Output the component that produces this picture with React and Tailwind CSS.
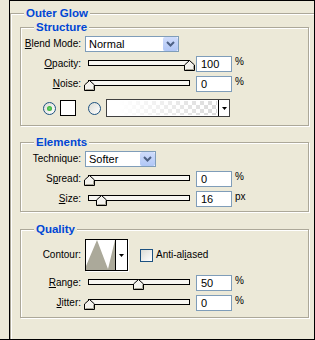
import React from "react";

const Thumb = ({ left }) => (
  <svg
    width="11"
    height="11"
    viewBox="0 0 11 11"
    className="absolute top-[4px]"
    style={{ left: left }}
  >
    <polygon points="5.5,0.5 10.5,5 10.5,10.5 0.5,10.5 0.5,5" fill="#F4F3EE" stroke="#000" />
    <polyline points="9.5,5.5 9.5,9.5 1.5,9.5" fill="none" stroke="#A7A596" />
  </svg>
);

const Slider = ({ left }) => (
  <div className="relative ml-[7px] h-[16px] w-[102px] shrink-0">
    <div className="absolute left-0 right-0 top-[4px] h-[6px] border border-black bg-[#F7F6F1]" />
    <Thumb left={left} />
  </div>
);

const Input = ({ value }) => (
  <div className="ml-[6px] flex h-[16px] w-[36px] shrink-0 items-center border border-[#7F9DB9] bg-white pl-[4px] text-[11px] leading-none">
    {value}
  </div>
);

const Label = ({ children }) => (
  <div className="w-[60px] shrink-0 text-right text-[10px] leading-none">{children}</div>
);

const U = ({ children }) => <span className="underline underline-offset-[1px]">{children}</span>;

const Chevron = () => (
  <div className="flex h-[14px] w-[15px] items-center justify-center rounded-[2px] bg-[linear-gradient(#CFDCFB,#B1C7F6)]">
    <svg width="9" height="6" viewBox="0 0 9 6">
      <polyline points="1,1 4.5,4.5 8,1" fill="none" stroke="#4D6185" strokeWidth="2" />
    </svg>
  </div>
);

const Select = ({ value, width }) => (
  <div
    className={`ml-[4px] flex h-[16px] shrink-0 items-center justify-between border border-[#7F9DB9] bg-white pl-[3px] text-[11px] leading-none ${width}`}
  >
    <span>{value}</span>
    <Chevron />
  </div>
);

const SliderRow = ({ label, value, unit, left }) => (
  <div className="flex h-[16px] items-center">
    <Label>{label}</Label>
    <Slider left={left} />
    <Input value={value} />
    <span className="ml-[3px] self-start text-[10px] leading-[12px]">{unit}</span>
  </div>
);

const Title = ({ children }) => (
  <div className="absolute left-0 top-[-7px] flex w-full pl-[13px]">
    <span className="bg-[#ECE9D8] px-[2px] text-[11.5px] font-bold leading-[12px] text-[#0046D5]">
      {children}
    </span>
  </div>
);

const Group = ({ title, className, children }) => (
  <div
    className={`relative w-[289px] border border-[#ACA899] shadow-[1px_1px_0_#fff,inset_1px_1px_0_#fff] ${className}`}
  >
    <Title>{title}</Title>
    {children}
  </div>
);

const Radio = ({ checked }) => (
  <div className="flex h-[13px] w-[13px] shrink-0 items-center justify-center rounded-full border border-[#1C5180] bg-[linear-gradient(135deg,#DCDCD6,#fff)]">
    {checked && <div className="h-[5px] w-[5px] rounded-full bg-[radial-gradient(circle,#6ED66E,#21A121)]" />}
  </div>
);

export default function App() {
  return (
    <div className="h-[340px] w-[315px] overflow-hidden border-r border-b border-black bg-[#ECE9D8] font-['Liberation_Sans',Arial,sans-serif] text-black">
      <div className="ml-[9px] h-full border-l border-t border-black pt-[12px]">
        <div className="relative h-[400px] w-[400px] border-l border-t border-[#ACA899] pl-[9px] pt-[13px] shadow-[inset_1px_1px_0_#fff]">
          <Title>Outer Glow</Title>

          <Group title="Structure" className="pt-[8px] pb-[8px]">
            <div className="flex flex-col gap-[4px]">
              <div className="flex h-[16px] items-center">
                <Label>
                  <U>B</U>lend Mode:
                </Label>
                <Select value="Normal" width="w-[94px]" />
              </div>
              <SliderRow label={<><U>O</U>pacity:</>} value="100" unit="%" left={96} />
              <SliderRow label={<><U>N</U>oise:</>} value="0" unit="%" left={-4} />
            </div>
            <div className="mt-[7px] flex h-[18px] items-center">
              <div className="ml-[22px]">
                <Radio checked />
              </div>
              <div className="ml-[4px] h-[16px] w-[16px] border border-black bg-white" />
              <div className="ml-[12px]">
                <Radio />
              </div>
              <div className="ml-[5px] flex h-[18px] w-[124px] border border-[#404040] bg-white">
                <div className="m-[1px] flex-1 bg-[conic-gradient(#DADADA_25%,#fff_0_50%,#DADADA_0_75%,#fff_0)] bg-[length:8px_8px]">
                  <div className="h-full w-full bg-linear-to-r from-white from-10% to-white/0" />
                </div>
                <div className="flex w-[11px] items-center justify-center border-l border-black">
                  <svg width="5" height="3" viewBox="0 0 5 3">
                    <polygon points="0,0 5,0 2.5,3" fill="#000" />
                  </svg>
                </div>
              </div>
            </div>
          </Group>

          <Group title="Elements" className="mt-[16px] pt-[8px] pb-[4px]">
            <div className="flex flex-col gap-[4px]">
              <div className="flex h-[16px] items-center">
                <Label>Technique:</Label>
                <Select value="Softer" width="w-[71px]" />
              </div>
              <SliderRow label={<>S<U>p</U>read:</>} value="0" unit="%" left={-4} />
              <SliderRow label={<><U>S</U>ize:</>} value="16" unit="px" left={8} />
            </div>
          </Group>

          <Group title="Quality" className="mt-[17px] pt-[9px] pb-[6px]">
            <div className="flex flex-col gap-[4px]">
              <div className="flex h-[32px] items-center">
                <Label>Contour:</Label>
                <div className="ml-[4px] flex h-[32px] w-[43px] border border-black bg-white shadow-[1px_1px_0_#fff]">
                  <svg width="29" height="30" viewBox="0 0 29 30" className="shrink-0">
                    <polygon points="0,30 0,26 11,0 22,29 29,0 29,30" fill="#ABA99A" />
                  </svg>
                  <div className="flex flex-1 items-center justify-center border-l border-black">
                    <svg width="5" height="3" viewBox="0 0 5 3">
                      <polygon points="0,0 5,0 2.5,3" fill="#000" />
                    </svg>
                  </div>
                </div>
                <div className="ml-[12px] h-[13px] w-[13px] border border-[#1C5180] bg-[linear-gradient(135deg,#DCDCD6,#fff)]" />
                <span className="ml-[3px] text-[10px] leading-none">
                  Anti-al<U>i</U>ased
                </span>
              </div>
              <SliderRow label={<><U>R</U>ange:</>} value="50" unit="%" left={45} />
              <SliderRow label={<><U>J</U>itter:</>} value="0" unit="%" left={-4} />
            </div>
          </Group>
        </div>
      </div>
    </div>
  );
}
